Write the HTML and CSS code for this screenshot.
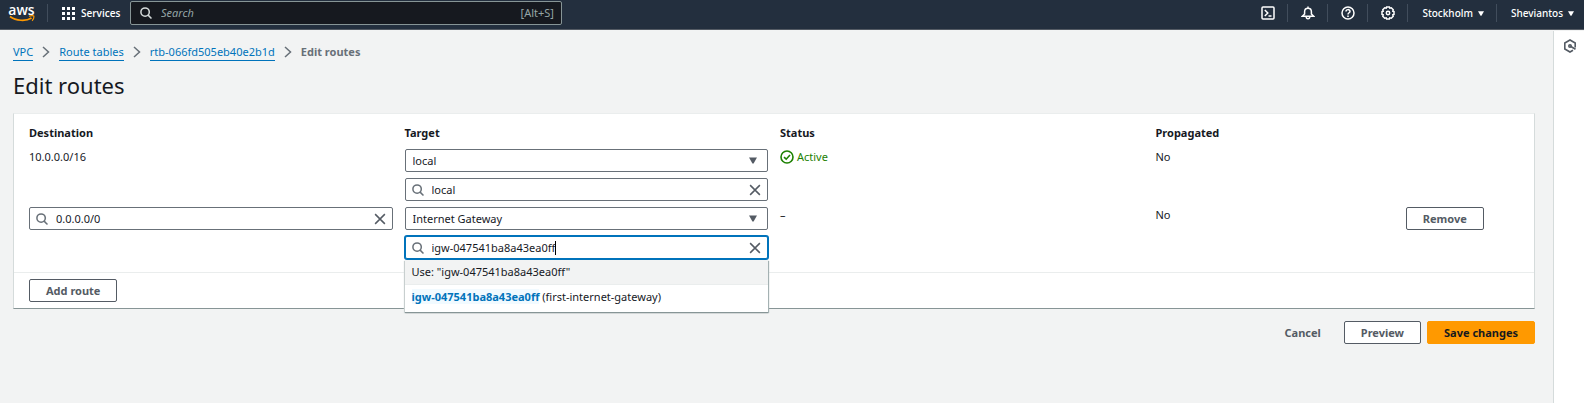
FILE: index.html
```
<!DOCTYPE html>
<html lang="en">
<head>
<meta charset="utf-8">
<meta name="viewport" content="width=device-width, initial-scale=1">
<title>Edit routes | VPC</title>
<link rel="stylesheet" href="styles.css">
</head>
<body>
<svg class="sprite" aria-hidden="true">
  <symbol id="search" viewBox="0 0 16 16"><circle cx="6.8" cy="6.8" r="5.6"/><path d="M10.800 10.800 15.300 15.300"/></symbol>
  <symbol id="close" viewBox="0 0 16 16"><path d="m1.500 1.500 13 13M14.500 1.500l-13 13"/></symbol>
  <symbol id="chevron" viewBox="0 0 8 12"><path d="m1 1 5.500 5L1 11"/></symbol>
  <symbol id="caret" viewBox="0 0 8 6"><path d="M0 0h8L4.600 6H3.400z"/></symbol>
</svg>
<header class="topbar">
  <a class="logo" href="#" aria-label="AWS home">
    <span class="logo-word">aws</span>
    <svg class="logo-smile" viewBox="0 0 26 7" aria-hidden="true"><path d="M1 1.500C7 6 17 6.500 22.500 3" fill="none" stroke="#f90" stroke-width="1.700"/><path d="M20 1.300c2-.8 4-.8 4.800-.2.300 1.600-.4 3.500-1.700 4.700" fill="none" stroke="#f90" stroke-width="1.200"/></svg>
  </a>
  <button class="services" type="button">
    <svg class="waffle" viewBox="0 0 13 13" aria-hidden="true"><path d="M0 0h3v3H0zM5 0h3v3H5zM10 0h3v3h-3zM0 5h3v3H0zM5 5h3v3H5zM10 5h3v3h-3zM0 10h3v3H0zM5 10h3v3H5zM10 10h3v3h-3z"/></svg>
    <span>Services</span>
  </button>
  <label class="global-search">
    <svg class="icon"><use href="#search"/></svg>
    <input type="search" placeholder="Search" aria-label="Search">
    <span class="shortcut">[Alt+S]</span>
  </label>
  <nav class="tools" aria-label="Account tools">
    <button class="tool" type="button" aria-label="CloudShell"><svg class="tool-icon" viewBox="0 0 14 14"><rect x="1" y="1" width="12" height="12" rx="1"/><path d="m3.800 4 3 3-3 3M7.500 10h3"/></svg></button>
    <button class="tool" type="button" aria-label="Notifications"><svg class="tool-icon" viewBox="0 0 14 14"><path d="M7 .5v1.700M1.300 10.300 3.600 8V5.800C3.600 3.500 5 2.200 7 2.200s3.400 1.300 3.400 3.600V8l2.300 2.300zM5.200 10.500c0 3 3.600 3 3.600 0"/></svg></button>
    <button class="tool" type="button" aria-label="Help"><svg class="tool-icon" viewBox="0 0 14 14"><circle cx="7" cy="7" r="6"/><path d="M5 5.600C5 3 9 3 9 5.400 9 6.800 7 6.700 7 8.400M7 9.600v1.300"/></svg></button>
    <button class="tool" type="button" aria-label="Settings"><svg class="tool-icon" viewBox="0 0 14 14"><path d="m5.600 1h2.800l.4 1.200 1.500-.4 1.900 1.900-.4 1.500 1.200.4v2.800l-1.200.4.4 1.500-1.900 1.900-1.500-.4-.4 1.200H5.600l-.4-1.200-1.500.4-1.900-1.900.4-1.500L1 8.400V5.600l1.200-.4-.4-1.500 1.900-1.900 1.500.4z"/><circle cx="7" cy="7" r="1.700"/></svg></button>
    <button class="menu" type="button">Stockholm <svg class="menu-caret"><use href="#caret"/></svg></button>
    <button class="menu" type="button">Sheviantos <svg class="menu-caret"><use href="#caret"/></svg></button>
  </nav>
</header>
<div class="shell">
  <main class="content">
    <nav class="crumbs" aria-label="Breadcrumb">
      <a href="#">VPC</a><svg class="chevron"><use href="#chevron"/></svg>
      <a href="#">Route tables</a><svg class="chevron"><use href="#chevron"/></svg>
      <a href="#">rtb-066fd505eb40e2b1d</a><svg class="chevron"><use href="#chevron"/></svg>
      <span class="current">Edit routes</span>
    </nav>
    <h1>Edit routes</h1>
    <form>
      <section class="card">
        <div class="card-body">
          <table class="routes">
            <colgroup><col class="wide"><col class="wide"><col class="wide"><col class="mid"><col class="slim"></colgroup>
            <thead><tr><th>Destination</th><th>Target</th><th>Status</th><th>Propagated</th><td></td></tr></thead>
            <tbody>
              <tr>
                <td><div class="value">10.0.0.0/16</div></td>
                <td>
                  <div class="stack">
                    <div class="select"><select aria-label="Target type, route 1"><option>local</option></select><svg class="select-caret"><use href="#caret"/></svg></div>
                    <div class="field"><svg class="icon"><use href="#search"/></svg><input type="text" value="local" aria-label="Target, route 1"><button type="button" class="clear" aria-label="Clear"><svg class="icon"><use href="#close"/></svg></button></div>
                  </div>
                </td>
                <td><div class="value active"><svg class="status-icon" viewBox="0 0 14 14"><circle cx="7" cy="7" r="6"/><path d="m4 7.200 2.200 2L10 5"/></svg>Active</div></td>
                <td><div class="value">No</div></td>
                <td></td>
              </tr>
              <tr>
                <td><div class="field"><svg class="icon"><use href="#search"/></svg><input type="text" value="0.0.0.0/0" aria-label="Destination, route 2"><button type="button" class="clear" aria-label="Clear"><svg class="icon"><use href="#close"/></svg></button></div></td>
                <td>
                  <div class="stack">
                    <div class="select"><select aria-label="Target type, route 2"><option>Internet Gateway</option></select><svg class="select-caret"><use href="#caret"/></svg></div>
                    <div class="combo">
                      <div class="field focused"><svg class="icon"><use href="#search"/></svg><input class="fit" type="text" value="igw-047541ba8a43ea0ff" aria-label="Target, route 2"><span class="cursor"></span><button type="button" class="clear" aria-label="Clear"><svg class="icon"><use href="#close"/></svg></button></div>
                      <div class="options" role="listbox" aria-label="Targets">
                        <div class="option highlighted" role="option">Use: "igw-047541ba8a43ea0ff"</div>
                        <div class="option" role="option"><mark>igw-047541ba8a43ea0ff</mark> (first-internet-gateway)</div>
                      </div>
                    </div>
                  </div>
                </td>
                <td><div class="value">–</div></td>
                <td><div class="value">No</div></td>
                <td><button class="btn" type="button">Remove</button></td>
              </tr>
            </tbody>
          </table>
        </div>
        <div class="card-footer"><button class="btn" type="button">Add route</button></div>
      </section>
      <div class="actions">
        <button class="btn link" type="button">Cancel</button>
        <button class="btn" type="button">Preview</button>
        <button class="btn primary" type="button">Save changes</button>
      </div>
    </form>
  </main>
  <aside class="rail">
    <button type="button" class="rail-btn" aria-label="Open panel"><svg class="rail-icon" viewBox="0 0 14 14"><path d="M12.200 8.500V4L7 1 1.800 4v6L7 13l3-1.700"/><circle cx="7" cy="7" r="1.200"/><path d="m7.500 7.300 5 3"/></svg></button>
  </aside>
</div>
</body>
</html>
```
FILE: styles.css
```
* { box-sizing: border-box; }
body {
  margin: 0;
  min-height: 100vh;
  display: flex;
  flex-direction: column;
  background: #f2f3f3;
  color: #16191f;
  font: 11px/18px "Noto Sans", "Open Sans", sans-serif;
}
button, input, select { font: inherit; color: inherit; margin: 0; padding: 0; border: 0; background: none; outline: 0; }
.sprite { position: absolute; width: 0; height: 0; }
.icon { width: 12px; height: 12px; flex: none; fill: none; stroke: currentColor; stroke-width: 2; }

.topbar { display: flex; align-items: center; height: 30px; padding-bottom: 3px; background: #232f3e; border-bottom: 1px solid #545b64; color: #fff; }
.logo { display: flex; flex-direction: column; align-items: center; width: 48px; height: 18px; padding-right: 4px; border-right: 1px solid #414d5c; color: #fff; text-decoration: none; }
.logo-word { font: 600 14px/11px "Open Sans", sans-serif; }
.logo-smile { width: 26px; height: 7px; flex: none; }
.services { display: flex; align-items: center; gap: 6px; width: 82px; padding-left: 14px; font: 600 10px/18px "Open Sans", sans-serif; }
.waffle { width: 13px; height: 13px; fill: #fff; }
.global-search { display: flex; align-items: center; gap: 9px; flex: 0 1 432px; height: 24px; padding: 0 7px 0 9px; border: 1px solid #879596; border-radius: 2px; background: #16191f; color: #d5dbdb; }
.global-search input { flex: 1; min-width: 0; }
.global-search input::placeholder { color: #95a5a6; font-style: italic; opacity: 1; }
.shortcut { color: #95a5a6; }
.tools { display: flex; align-items: center; margin-left: auto; }
.tool { display: flex; align-items: center; justify-content: center; width: 40px; height: 18px; border-right: 1px solid #414d5c; }
.tool-icon { width: 14px; height: 14px; fill: none; stroke: #fff; stroke-width: 1.5; }
.menu { display: flex; align-items: center; gap: 5px; height: 18px; padding: 0 12px 0 14px; font: 500 10px/18px "Noto Sans", sans-serif; }
.menu + .menu { padding-right: 10px; border-left: 1px solid #414d5c; }
.menu-caret { width: 6px; height: 5px; fill: #fff; }

.shell { display: flex; flex: 1; }
.content { flex: 1; min-width: 0; padding: 13px 18px 13px 13px; }
.rail { width: 31px; margin-top: 1px; padding: 8px 0 0 9px; background: #fff; border-left: 1px solid #d5dbdb; }
.rail-btn, .rail-icon { display: block; width: 14px; height: 14px; }
.rail-icon { fill: none; stroke: #545b64; stroke-width: 1.6; }

.crumbs { display: flex; align-items: center; gap: 9px; }
.crumbs a { color: #0073bb; line-height: 16px; text-decoration: none; border-bottom: 1px solid; }
.chevron { width: 8px; height: 12px; fill: none; stroke: #687078; stroke-width: 1.5; }
.current { color: #687078; font-weight: 700; }
h1 { margin: 9px 0 13px; font-size: 22px; line-height: 30px; font-weight: 400; }

.card { background: #fff; border: 1px solid #d5dbdb; border-top-color: #eaeded; border-bottom-color: #879596; }
.card-body { padding: 10px 15px 7px; }
.card-footer { padding: 6px 15px; border-top: 1px solid #eaeded; }
.routes { width: calc(100% + 12px); table-layout: fixed; border-collapse: collapse; }
.wide { width: 25%; }
.mid { width: 16.666%; }
.slim { width: 8.334%; }
.routes th, .routes td { padding: 0 12px 6px 0; text-align: left; vertical-align: top; }
.routes th { padding-bottom: 7px; }
.value { line-height: 16px; }
.active { display: flex; align-items: center; gap: 3px; color: #1d8102; }
.status-icon { width: 14px; height: 14px; fill: none; stroke: currentColor; stroke-width: 1.6; }
.stack { display: flex; flex-direction: column; gap: 6px; }
.select { display: grid; align-items: center; height: 23px; border: 1px solid #687078; border-radius: 2px; background: #fff; }
.select select { grid-area: 1 / 1; height: 21px; padding-left: 7px; appearance: none; }
.select-caret { grid-area: 1 / 1; justify-self: end; width: 8px; height: 7px; margin-right: 10px; fill: #545b64; pointer-events: none; }
.field { display: flex; align-items: center; height: 23px; padding: 0 6px; border: 1px solid #687078; border-radius: 2px; background: #fff; }
.field .icon { color: #687078; }
.field .clear .icon { color: #545b64; }
.field input { flex: 1; min-width: 0; margin-left: 8px; }
.field .fit { flex: none; field-sizing: content; }
.clear { display: flex; margin-left: auto; }
.cursor { width: 1px; height: 14px; background: #000; }
.focused { border-color: #0073bb; box-shadow: 0 0 0 1px #0073bb; }
.combo { position: relative; }
.options { position: absolute; top: 24px; left: 0; right: 0; background: #fff; box-shadow: 0 1px 1px #879596, 1px 1px 1px #aab7b8, -1px 1px 1px #d5dbdb; }
.option { padding: 3px 7px 6px; }
.highlighted { padding-bottom: 3px; background: #f2f3f3; border-bottom: 1px solid #eaeded; }
.option mark { background: #f1faff; color: #0073bb; font-weight: 700; }

.btn { height: 23px; padding: 0 16px; border: 1px solid #545b64; border-radius: 2px; background: #fff; color: #545b64; font-weight: 700; line-height: 21px; display: block; }
.actions { display: flex; justify-content: flex-end; gap: 6px; padding-top: 12px; }
.link { border-color: transparent; background: none; }
.primary { border-color: #f90; background: #f90; color: #16191f; }
```
